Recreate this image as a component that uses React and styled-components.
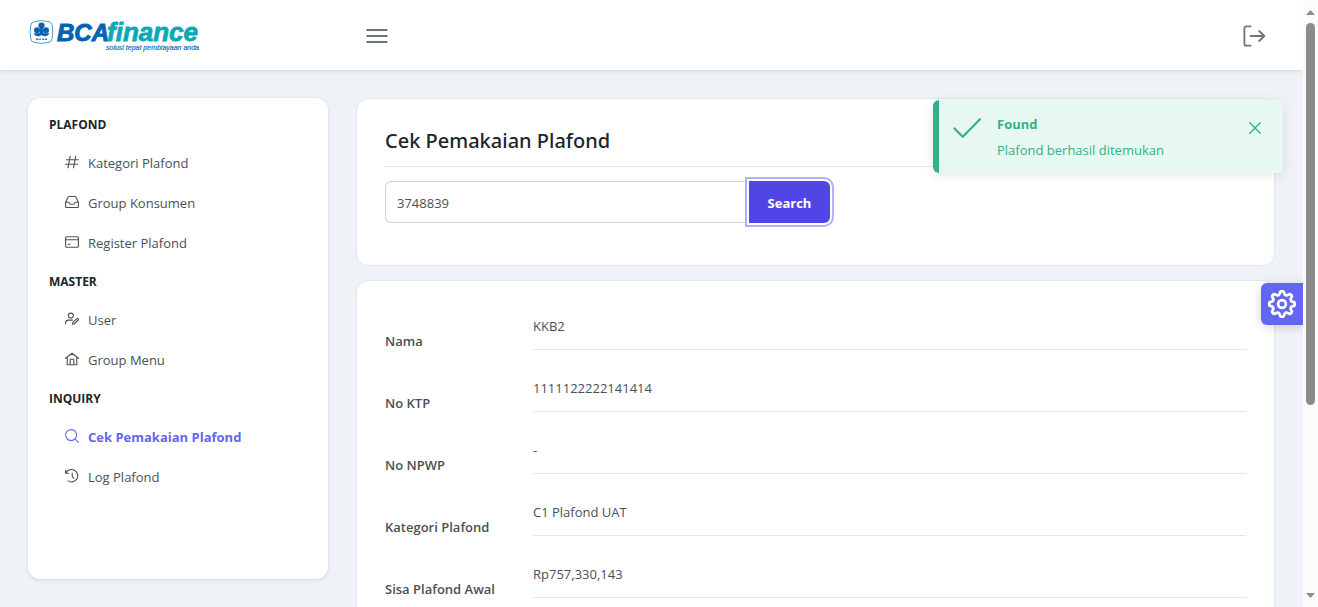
import React from "react";
import styled, { createGlobalStyle, css } from "styled-components";

const GlobalStyle = createGlobalStyle`
  *, *::before, *::after { box-sizing: border-box; }
  html, body { margin: 0; height: 100%; }
  body {
    font-family: "Segoe UI", "Open Sans", "Noto Sans", sans-serif;
    font-size: 13px;
    line-height: 21px;
    color: #495057;
    background: #eff3f8;
  }
  button, input { font: inherit; }
`;

const Window = styled.div`
  display: flex;
  height: 100vh;
  overflow: hidden;
`;

const Page = styled.div`
  position: relative;
  flex: 1;
  min-width: 0;
  overflow: hidden;
`;

const Topbar = styled.header`
  display: flex;
  align-items: center;
  height: 70px;
  padding: 2px 28px 0;
  background: #fff;
  box-shadow: 0 3px 5px rgba(0, 0, 0, 0.02), 0 0 2px rgba(0, 0, 0, 0.05), 0 1px 4px rgba(0, 0, 0, 0.08);
`;

const LogoLink = styled.a`
  display: block;
  width: 328px;
  height: 36px;
`;

const IconButton = styled.button`
  display: flex;
  align-items: center;
  justify-content: center;
  width: 42px;
  height: 42px;
  padding: 0;
  border: 0;
  border-radius: 50%;
  background: transparent;
  color: #6c757d;
  cursor: pointer;
  ${(p) => p.$end && css`margin-left: auto;`}
`;

const Body = styled.div`
  display: flex;
  align-items: flex-start;
  gap: 28px;
  padding: 28px;
`;

const Sidebar = styled.nav`
  flex: none;
  width: 300px;
  height: calc(100vh - 126px);
  padding: 8px 21px;
  border-radius: 12px;
  background: #fff;
  box-shadow: 0 3px 5px rgba(0, 0, 0, 0.02), 0 0 2px rgba(0, 0, 0, 0.05), 0 1px 4px rgba(0, 0, 0, 0.08);
`;

const MenuHeading = styled.h2`
  margin: 0;
  font-size: 12px;
  font-weight: 700;
  line-height: 37px;
  color: #212529;
`;

const MenuList = styled.ul`
  margin: 0;
  padding: 0;
  list-style: none;
`;

const MenuLink = styled.a`
  display: flex;
  align-items: center;
  gap: 9px;
  height: 40px;
  padding: 0 16px;
  color: ${(p) => (p.$active ? "#6366f1" : "#495057")};
  font-weight: ${(p) => (p.$active ? 700 : 400)};
  text-decoration: none;

  svg {
    margin-bottom: 2px;
  }
`;

const Content = styled.main`
  flex: 1;
  min-width: 0;
  display: flex;
  flex-direction: column;
  gap: 14px;
`;

const Card = styled.section`
  padding: 28px;
  border: 1px solid #dfe7ef;
  border-radius: 12px;
  background: #fff;
`;

const Title = styled.h1`
  margin: 0 0 14px;
  padding-bottom: 12px;
  border-bottom: 1px solid #dfe7ef;
  font-family: "Segoe UI", "Noto Sans", "Open Sans", sans-serif;
  font-size: 20px;
  font-weight: 500;
  line-height: 27px;
  color: #212529;
`;

const SearchForm = styled.form`
  display: flex;
  max-width: 445px;
  margin-bottom: 14px;
`;

const SearchInput = styled.input`
  flex: 1;
  min-width: 0;
  height: 42px;
  padding: 2px 11px 0;
  border: 1px solid #ced4da;
  border-right: 0;
  border-radius: 6px 0 0 6px;
  background: #fff;
  color: #495057;
  outline: 0;
`;

const SearchButton = styled.button`
  width: 81px;
  height: 42px;
  padding: 2px 0 0;
  border: 0;
  border-radius: 0 6px 6px 0;
  background: #4f46e5;
  box-shadow: 0 0 0 2px #fff, 0 0 0 4px #b1b3f8;
  color: #fff;
  font-weight: 700;
  cursor: pointer;
`;

const Details = styled.dl`
  margin: 0;
`;

const DetailRow = styled.div`
  display: flex;
  height: 62px;
`;

const DetailLabel = styled.dt`
  width: 148px;
  padding-top: 22px;
  font-weight: 600;
`;

const DetailValue = styled.dd`
  flex: 1;
  height: 41px;
  margin: 0;
  padding-top: 7px;
  border-bottom: 1px solid #dfe7ef;
`;

const Toast = styled.div`
  position: absolute;
  top: 100px;
  right: 20px;
  display: flex;
  align-items: flex-start;
  width: 350px;
  height: 73px;
  padding: 14px;
  border-left: 6px solid #34b189;
  border-radius: 6px;
  background: rgba(228, 248, 240, 0.93);
  box-shadow: 0 2px 12px rgba(0, 0, 0, 0.1);
  color: #34b189;
`;

const ToastText = styled.div`
  flex: 1;
  margin-left: 16px;
`;

const ToastTitle = styled.strong`
  display: block;
  font-weight: 700;
`;

const ToastDetail = styled.p`
  margin: 5px 0 0;
`;

const CloseButton = styled.button`
  display: flex;
  align-items: center;
  justify-content: center;
  width: 28px;
  height: 28px;
  padding: 0;
  border: 0;
  background: transparent;
  color: inherit;
  cursor: pointer;
`;

const SettingsButton = styled.button`
  position: absolute;
  top: 283px;
  right: 0;
  display: flex;
  align-items: center;
  justify-content: center;
  width: 42px;
  height: 42px;
  padding: 0;
  border: 0;
  border-radius: 6px 0 0 6px;
  background: #6366f1;
  box-shadow: 0 2px 12px rgba(0, 0, 0, 0.16);
  color: #fff;
  cursor: pointer;
`;

const ScrollTrack = styled.div`
  flex: none;
  display: flex;
  flex-direction: column;
  align-items: center;
  width: 15px;
  padding: 10px 0 9px;
  background: #fcfcfc;
`;

const ScrollArrow = styled.span`
  width: 9px;
  height: 5px;
  background: #8b8b8b;
  clip-path: ${(p) => (p.$down ? "polygon(0 0, 100% 0, 50% 100%)" : "polygon(50% 0, 100% 100%, 0 100%)")};
  ${(p) => p.$down && css`margin-top: auto;`}
`;

const ScrollThumb = styled.span`
  width: 9px;
  height: 65%;
  margin-top: 8px;
  border-radius: 5px;
  background: #8b8b8b;
`;

const Icon = ({ size = 14, stroke = 1.1, children }) => (
  <svg
    width={size}
    height={size}
    viewBox="0 0 14 14"
    fill="none"
    stroke="currentColor"
    strokeWidth={stroke}
    strokeLinecap="round"
    strokeLinejoin="round"
    aria-hidden="true"
  >
    {children}
  </svg>
);

const icons = {
  hash: <path d="M5.200 1.200 3 12.800M10.700 1.200 8.500 12.800M1.400 4.700h12M.6 9.300h12" />,
  inbox: (
    <path d="M.6 7.200v4.300c0 .6.4 1 1 1h10.800c.6 0 1-.4 1-1V7.200L11 2.200c-.2-.5-.5-.7-1-.7H4c-.5 0-.8.2-1 .7L.6 7.200h3.200l1 1.600c.2.3.4.4.7.4h3c.3 0 .5-.1.7-.4l1-1.600h3.200" />
  ),
  card: (
    <>
      <rect x=".6" y="1.8" width="12.8" height="10.4" rx="1" />
      <path d="M.6 4.800h12.800M3 9.200h2" />
    </>
  ),
  userEdit: (
    <>
      <circle cx="5.800" cy="3.600" r="2.500" />
      <path d="M.6 11.700V11c0-1.700 1.300-2.900 2.900-2.900h3.900M7.400 12.300l.3-1.700 4-4c.4-.4 1-.4 1.400 0s.4 1 0 1.400l-4 4z" />
    </>
  ),
  home: <path d="M.6 6.300 7 1.300l6.400 5M2.200 5.200v7.600h9.600V5.200M5.200 12.800V7.700c0-.3.2-.5.5-.5h2.600c.3 0 .5.2.5.5v5.100" />,
  search: (
    <>
      <circle cx="6.100" cy="6.100" r="5.500" />
      <path d="m10.100 10.100 3.300 3.300" />
    </>
  ),
  history: <path d="M.6 1.200v3.100h3.100M.9 4.100A6.200 6.200 0 1 1 3.100 11.900M7.200 4v3.200l1.600 2.300" />,
};

const menu = [
  {
    heading: "PLAFOND",
    items: [
      { label: "Kategori Plafond", icon: "hash" },
      { label: "Group Konsumen", icon: "inbox" },
      { label: "Register Plafond", icon: "card" },
    ],
  },
  {
    heading: "MASTER",
    items: [
      { label: "User", icon: "userEdit" },
      { label: "Group Menu", icon: "home" },
    ],
  },
  {
    heading: "INQUIRY",
    items: [
      { label: "Cek Pemakaian Plafond", icon: "search", active: true },
      { label: "Log Plafond", icon: "history" },
    ],
  },
];

const details = [
  ["Nama", "KKB2"],
  ["No KTP", "1111122222141414"],
  ["No NPWP", "-"],
  ["Kategori Plafond", "C1 Plafond UAT"],
  ["Sisa Plafond Awal", "Rp757,330,143"],
];

const Logo = () => (
  <svg width="172" height="36" viewBox="0 0 172 36" role="img" aria-label="BCA finance">
    <path
      d="M7 3.500Q13.500 1.800 20 3.500Q24.200 4 24.300 8Q25.200 14 24.300 20Q24 24.200 20 24.600Q13.500 26.200 7 24.600Q3 24.200 2.600 20Q1.700 14 2.600 8Q2.800 4 7 3.500z"
      fill="#fff"
      stroke="#5a97cb"
      strokeWidth="1"
    />
    <g fill="#0a5fae">
      <circle cx="13.500" cy="7.600" r="3.100" />
      <circle cx="9" cy="12.200" r="3" />
      <circle cx="18" cy="12.200" r="3" />
      <path d="M12.300 9h2.400l.6 6h-3.600z" />
      <path d="M5.500 15.200c2.500.2 5 .2 6.700-.5l1.300-1.400 1.300 1.400c1.700.7 4.200.7 6.700.5-1 1.900-2.600 2.900-4.600 3-1.400.1-2.400-.4-3.400-1.100-1 .7-2 1.200-3.400 1.100-2-.1-3.600-1.100-4.600-3z" />
      <path d="M8 20.400h2.500v1.500H8zM11.200 20.400h1.600v1.500h-1.600zM14.200 20.400H16v1.500h-1.800zM16.700 20.400h2.300v1.500h-2.300z" opacity=".8" />
    </g>
    <g fontFamily="Liberation Sans, Arial, sans-serif" fontStyle="italic" fontWeight="700">
      <text x="29" y="23" fontSize="24" fill="#0563b2" stroke="#0563b2" strokeWidth="1">
        BCA
      </text>
      <text x="79" y="23" fontSize="26" fill="#0aa9b5" stroke="#0aa9b5" strokeWidth=".8">
        finance
      </text>
    </g>
    <text x="78" y="32" fontSize="7" fill="#2572b8" stroke="#2572b8" strokeWidth=".2" fontStyle="italic" fontFamily="Liberation Sans, Arial, sans-serif">
      solusi tepat pembiayaan anda
    </text>
  </svg>
);

const gearPath = (() => {
  const points = [];
  for (let i = 0; i <= 96; i += 1) {
    const a = (i / 96) * Math.PI * 2;
    const wave = Math.cos(8 * a);
    const r = 11.2 + 1.7 * Math.tanh(1.8 * wave);
    points.push(`${(14 + r * Math.cos(a)).toFixed(2)} ${(14 + r * Math.sin(a)).toFixed(2)}`);
  }
  return `M${points.join("L")}z`;
})();

export default function App() {
  return (
    <>
      <GlobalStyle />
      <Window>
        <Page>
          <Topbar>
            <LogoLink href="#">
              <Logo />
            </LogoLink>
            <IconButton type="button" aria-label="Toggle menu">
              <svg width="22" height="16" viewBox="0 0 22 16" fill="none" stroke="currentColor" strokeWidth="1.8" strokeLinecap="round" aria-hidden="true">
                <path d="M1.200 2h19.600M1.200 8h19.600M1.200 14h19.600" />
              </svg>
            </IconButton>
            <IconButton type="button" aria-label="Sign out" $end>
              <svg width="24" height="24" viewBox="0 0 24 24" fill="none" stroke="currentColor" strokeWidth="1.8" strokeLinecap="round" strokeLinejoin="round" aria-hidden="true">
                <path d="M8.600 2.300H4.400a2 2 0 0 0-2 2v15.400a2 2 0 0 0 2 2h4.200M8.600 12h13.800M17.200 7l5.200 5-5.200 5" />
              </svg>
            </IconButton>
          </Topbar>

          <Body>
            <Sidebar aria-label="Main menu">
              {menu.map((group) => (
                <React.Fragment key={group.heading}>
                  <MenuHeading>{group.heading}</MenuHeading>
                  <MenuList>
                    {group.items.map((item) => (
                      <li key={item.label}>
                        <MenuLink href="#" $active={item.active}>
                          <Icon>{icons[item.icon]}</Icon>
                          <span>{item.label}</span>
                        </MenuLink>
                      </li>
                    ))}
                  </MenuList>
                </React.Fragment>
              ))}
            </Sidebar>

            <Content>
              <Card>
                <Title>Cek Pemakaian Plafond</Title>
                <SearchForm onSubmit={(e) => e.preventDefault()}>
                  <SearchInput type="text" aria-label="Nomor plafond" defaultValue="3748839" />
                  <SearchButton type="submit">Search</SearchButton>
                </SearchForm>
              </Card>
              <Card>
                <Details>
                  {details.map(([label, value]) => (
                    <DetailRow key={label}>
                      <DetailLabel>{label}</DetailLabel>
                      <DetailValue>{value}</DetailValue>
                    </DetailRow>
                  ))}
                </Details>
              </Card>
            </Content>
          </Body>

          <Toast role="alert">
            <svg width="28" height="28" viewBox="0 0 28 28" fill="none" stroke="currentColor" strokeWidth="2.2" strokeLinecap="round" strokeLinejoin="round" aria-hidden="true">
              <path d="M1.500 14.500 9.800 22.800 27 5.200" />
            </svg>
            <ToastText>
              <ToastTitle>Found</ToastTitle>
              <ToastDetail>Plafond berhasil ditemukan</ToastDetail>
            </ToastText>
            <CloseButton type="button" aria-label="Close">
              <svg width="12" height="12" viewBox="0 0 12 12" stroke="currentColor" strokeWidth="1.4" strokeLinecap="round" aria-hidden="true">
                <path d="m.8.8 10.400 10.400M11.200.8.8 11.200" />
              </svg>
            </CloseButton>
          </Toast>

          <SettingsButton type="button" aria-label="Settings">
            <svg width="28" height="28" viewBox="0 0 28 28" fill="none" stroke="currentColor" strokeWidth="2.8" strokeLinejoin="round" aria-hidden="true">
              <path d={gearPath} />
              <circle cx="14" cy="14" r="3.900" />
            </svg>
          </SettingsButton>
        </Page>

        <ScrollTrack aria-hidden="true">
          <ScrollArrow />
          <ScrollThumb />
          <ScrollArrow $down />
        </ScrollTrack>
      </Window>
    </>
  );
}
